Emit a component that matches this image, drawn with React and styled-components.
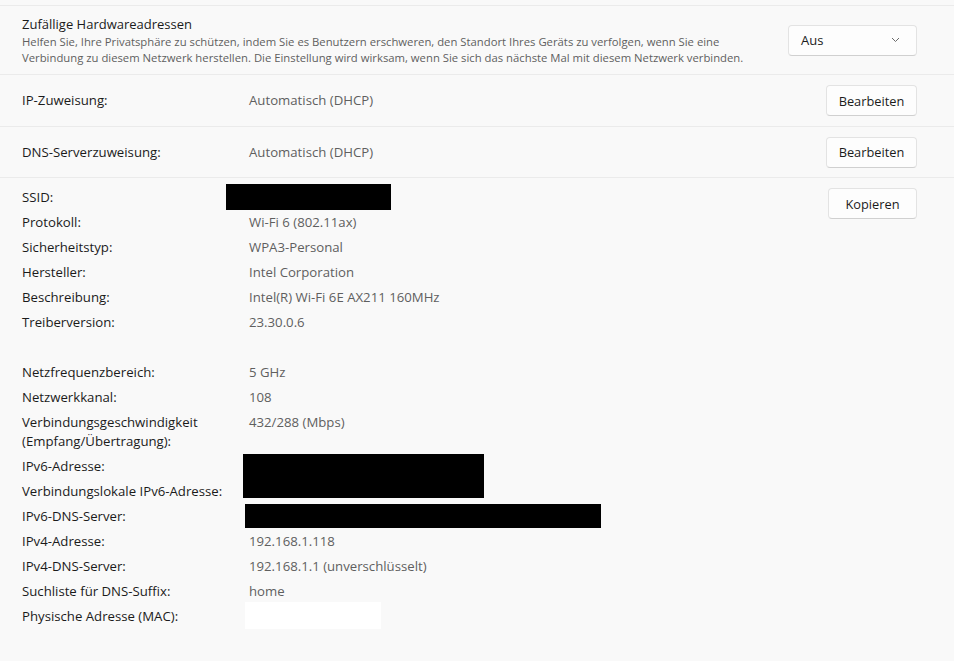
import React from "react";
import styled, { createGlobalStyle } from "styled-components";

const Global = createGlobalStyle`
  html, body {
    margin: 0;
    padding: 0;
    background: #f9f9f9;
  }
  body {
    font-family: "Segoe UI", "Open Sans", "Noto Sans", sans-serif;
    color: #1b1b1b;
  }
`;

const Page = styled.div`
  width: 954px;
  min-height: 661px;
  padding-top: 5px;
  background: #f9f9f9;
  box-sizing: border-box;
`;

/* ===== Setting rows ===== */
const SettingRow = styled.div`
  display: flex;
  align-items: center;
  height: ${(p) => p.$h}px;
  padding: 0 37px 0 22px;
  border-top: 1px solid #ebebeb;
  box-sizing: content-box;
`;

const TextCol = styled.div`
  flex: 1;
  min-width: 0;
`;

const SettingTitle = styled.div`
  font-size: 13px;
  line-height: 20px;
  color: #1b1b1b;
`;

const SettingDesc = styled.div`
  font-size: 11.3px;
  line-height: 16px;
  color: #5f5f5f;
  white-space: nowrap;
`;

const Label = styled.div`
  width: 227px;
  flex-shrink: 0;
  font-size: 13.2px;
  line-height: 19px;
  color: #1b1b1b;
  white-space: nowrap;
`;

const Value = styled.div`
  flex: 1;
  font-size: 13.2px;
  line-height: 19px;
  color: #5f5f5f;
  white-space: nowrap;
`;

const Button = styled.button`
  height: 31px;
  width: ${(p) => p.$w || 91}px;
  padding: 0;
  background: #fdfdfd;
  border: 1px solid #e3e3e3;
  border-bottom-color: #d0d0d0;
  border-radius: 4px;
  font-family: inherit;
  font-size: 12.8px;
  color: #1b1b1b;
  cursor: pointer;
`;

const Select = styled.div`
  display: flex;
  align-items: center;
  justify-content: space-between;
  width: 129px;
  height: 31px;
  padding: 0 16px 0 12px;
  box-sizing: border-box;
  background: #fdfdfd;
  border: 1px solid #e3e3e3;
  border-bottom-color: #d0d0d0;
  border-radius: 4px;
  font-size: 13px;
  color: #1b1b1b;
`;

const Chevron = () => (
  <svg width="9" height="6" viewBox="0 0 9 6" fill="none">
    <path d="M1 1l3.5 3.5L8 1" stroke="#6b6b6b" strokeWidth="1" />
  </svg>
);

/* ===== Details ===== */
const Details = styled.div`
  display: flex;
  align-items: flex-start;
  padding: 7px 37px 20px 22px;
  border-top: 1px solid #ebebeb;
`;

const DetailList = styled.div`
  flex: 1;
  display: flex;
  flex-direction: column;
`;

const DetailRow = styled.div`
  display: flex;
  padding: 3px 0;
  min-height: 19px;
`;

const CopyWrap = styled.div`
  padding-top: 3px;
`;

/* redaction blocks lie over the screenshot's values */
const Redact = styled.span`
  display: block;
  position: relative;
  left: ${(p) => p.$x}px;
  top: ${(p) => p.$y}px;
  width: ${(p) => p.$w}px;
  height: ${(p) => p.$h}px;
  background: ${(p) => p.$c || "#000"};
  z-index: 1;
`;

const RedactHolder = styled.div`
  height: 19px;
`;

const details = [
  ["SSID:", { redact: { x: -23, y: -4, w: 165, h: 26 } }],
  ["Protokoll:", "Wi-Fi 6 (802.11ax)"],
  ["Sicherheitstyp:", "WPA3-Personal"],
  ["Hersteller:", "Intel Corporation"],
  ["Beschreibung:", "Intel(R) Wi-Fi 6E AX211 160MHz"],
  ["Treiberversion:", "23.30.0.6"],
  ["", ""],
  ["Netzfrequenzbereich:", "5 GHz"],
  ["Netzwerkkanal:", "108"],
  [["Verbindungsgeschwindigkeit", "(Empfang/Übertragung):"], "432/288 (Mbps)"],
  ["IPv6-Adresse:", { redact: { x: -6, y: -3, w: 241, h: 44 } }],
  ["Verbindungslokale IPv6-Adresse:", ""],
  ["IPv6-DNS-Server:", { redact: { x: -4, y: -3, w: 356, h: 24 } }],
  ["IPv4-Adresse:", "192.168.1.118"],
  ["IPv4-DNS-Server:", "192.168.1.1 (unverschlüsselt)"],
  ["Suchliste für DNS-Suffix:", "home"],
  ["Physische Adresse (MAC):", { redact: { x: -4, y: -5, w: 136, h: 27, c: "#ffffff" } }],
];

export default function App() {
  return (
    <Page>
      <Global />
      <SettingRow $h={68}>
        <TextCol>
          <SettingTitle>Zufällige Hardwareadressen</SettingTitle>
          <SettingDesc>
            Helfen Sie, Ihre Privatsphäre zu schützen, indem Sie es Benutzern erschweren, den Standort Ihres Geräts zu verfolgen, wenn Sie eine
            <br />
            Verbindung zu diesem Netzwerk herstellen. Die Einstellung wird wirksam, wenn Sie sich das nächste Mal mit diesem Netzwerk verbinden.
          </SettingDesc>
        </TextCol>
        <Select>
          <span>Aus</span>
          <Chevron />
        </Select>
      </SettingRow>

      <SettingRow $h={51}>
        <Label>IP-Zuweisung:</Label>
        <Value>Automatisch (DHCP)</Value>
        <Button>Bearbeiten</Button>
      </SettingRow>

      <SettingRow $h={50}>
        <Label>DNS-Serverzuweisung:</Label>
        <Value>Automatisch (DHCP)</Value>
        <Button>Bearbeiten</Button>
      </SettingRow>

      <Details>
        <DetailList>
          {details.map(([label, value], i) => (
            <DetailRow key={i}>
              <Label>
                {Array.isArray(label)
                  ? label.map((l) => <div key={l}>{l}</div>)
                  : label}
              </Label>
              <Value>
                {value && value.redact ? (
                  <RedactHolder>
                    <Redact
                      $x={value.redact.x}
                      $y={value.redact.y}
                      $w={value.redact.w}
                      $h={value.redact.h}
                      $c={value.redact.c}
                    />
                  </RedactHolder>
                ) : (
                  value
                )}
              </Value>
            </DetailRow>
          ))}
        </DetailList>
        <CopyWrap>
          <Button $w={89}>Kopieren</Button>
        </CopyWrap>
      </Details>
    </Page>
  );
}
